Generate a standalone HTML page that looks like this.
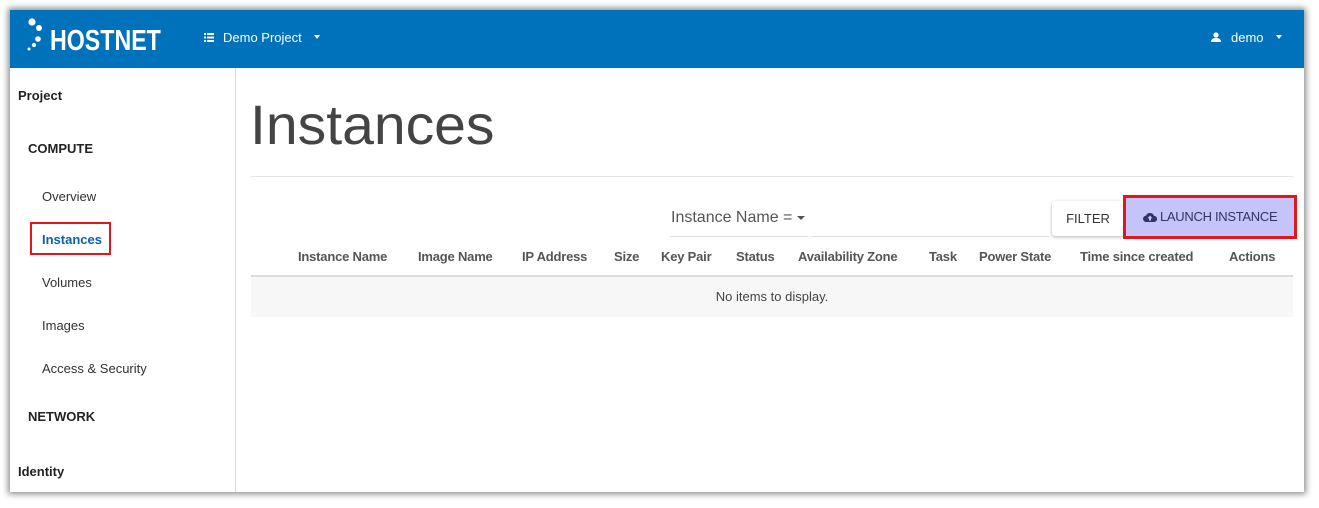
<!DOCTYPE html>
<html><head><meta charset="utf-8"><style>
*{margin:0;padding:0;box-sizing:border-box}
body{width:1319px;height:508px;background:#fff;font-family:"Liberation Sans",sans-serif;position:relative;overflow:hidden}
.frame{position:absolute;left:10px;top:10px;width:1294px;height:482px;background:#fff;box-shadow:0 0 6px 2px rgba(0,0,0,.45)}
.hdr{position:absolute;left:0;top:0;width:1294px;height:58px;background:#0072bc;color:#fff}
.side{position:absolute;left:0;top:58px;width:226px;height:424px;border-right:1px solid #ddd}
.t{position:absolute;white-space:nowrap}
.b{font-weight:bold}
.th{position:absolute;top:239px;font-size:13px;font-weight:bold;color:#555;letter-spacing:-0.2px}
</style></head><body>
<div class="frame">
<div class="hdr">
<svg class="t" style="left:16px;top:8px" width="22" height="36"><circle cx="6" cy="4" r="3.6" fill="#fff"/><circle cx="13" cy="10" r="3" fill="#fff"/><circle cx="12" cy="21" r="2.8" fill="#fff"/><circle cx="8" cy="27" r="2.1" fill="#fff"/><circle cx="3" cy="31" r="1.5" fill="#fff"/></svg>
<div class="t b" style="left:40px;top:15px;font-size:29px;line-height:32px;transform:scaleX(0.8);transform-origin:left">HOSTNET</div>
<svg class="t" style="left:194px;top:23px" width="10" height="9"><rect x="0" y="0" width="2" height="2" fill="#fff"/><rect x="3" y="0" width="7" height="2" fill="#fff"/><rect x="0" y="3.5" width="2" height="2" fill="#fff"/><rect x="3" y="3.5" width="7" height="2" fill="#fff"/><rect x="0" y="7" width="2" height="2" fill="#fff"/><rect x="3" y="7" width="7" height="2" fill="#fff"/></svg>
<div class="t" style="left:213px;top:20px;font-size:13px">Demo Project</div>
<div class="t" style="left:304px;top:25px;border-left:3.5px solid transparent;border-right:3.5px solid transparent;border-top:4px solid #fff"></div>
<svg class="t" style="left:1201px;top:22px" width="10" height="10"><circle cx="5" cy="3" r="2.6" fill="#fff"/><path d="M0 10 Q0 6 5 6 Q10 6 10 10Z" fill="#fff"/></svg>
<div class="t" style="left:1221px;top:20px;font-size:13px">demo</div>
<div class="t" style="left:1266px;top:25px;border-left:3.5px solid transparent;border-right:3.5px solid transparent;border-top:4px solid #fff"></div>
</div>
<div class="side">
<div class="t b" style="left:8px;top:20px;font-size:13px;color:#222">Project</div>
<div class="t b" style="left:18px;top:73px;font-size:13px;color:#222">COMPUTE</div>
<div class="t" style="left:32px;top:121px;font-size:13px;color:#333">Overview</div>
<div class="t" style="left:20px;top:154px;width:81px;height:33px;border:2px solid #e8141b"></div>
<div class="t b" style="left:32px;top:164px;font-size:13px;color:#0d5fb0">Instances</div>
<div class="t" style="left:32px;top:207px;font-size:13px;color:#333">Volumes</div>
<div class="t" style="left:32px;top:250px;font-size:13px;color:#333">Images</div>
<div class="t" style="left:32px;top:293px;font-size:13px;color:#333">Access &amp; Security</div>
<div class="t b" style="left:18px;top:341px;font-size:13px;color:#222">NETWORK</div>
<div class="t b" style="left:8px;top:396px;font-size:13px;color:#222">Identity</div>
</div>
<div class="t" style="left:240px;top:80px;font-size:56px;color:#444;line-height:70px;transform:scaleX(1.02);transform-origin:left">Instances</div>
<div class="t" style="left:241px;top:166px;width:1042px;height:1px;background:#e5e5e5"></div>
<div class="t" style="left:661px;top:199px;font-size:16px;color:#555">Instance Name =</div>
<div class="t" style="left:787px;top:206px;border-left:4px solid transparent;border-right:4px solid transparent;border-top:4px solid #555"></div>
<div class="t" style="left:660px;top:226px;width:138px;height:1px;background:#ddd"></div>
<div class="t" style="left:801px;top:226px;width:238px;height:1px;background:#ddd"></div>
<div class="t" style="left:1042px;top:191px;width:72px;height:35px;border-radius:3px;box-shadow:0 1px 3px rgba(0,0,0,.3);background:#fff;font-size:13px;color:#333;text-align:center;line-height:35px">FILTER</div>
<div class="t" style="left:1113px;top:185px;width:174px;height:44px;border:3px solid #e8141b"></div>
<div class="t" style="left:1116px;top:188px;width:168px;height:38px;background:#c4c4fa;border-radius:2px;font-size:13px;color:#333366;line-height:38px;padding-left:17px;letter-spacing:-0.3px">
<svg style="vertical-align:-1px;margin-right:3px" width="14" height="10" viewBox="0 0 14 10"><path d="M3.5 10 A3.2 3.2 0 0 1 3 3.6 A4.3 4.3 0 0 1 11 3.9 A3 3 0 0 1 11 10Z" fill="#333366"/><path d="M7 3.5 L9.5 6.3 H8 V8.5 H6 V6.3 H4.5Z" fill="#c4c4fa"/></svg>LAUNCH INSTANCE</div>
<div class="th" style="left:288px">Instance Name</div>
<div class="th" style="left:408px">Image Name</div>
<div class="th" style="left:512px">IP Address</div>
<div class="th" style="left:604px">Size</div>
<div class="th" style="left:651px">Key Pair</div>
<div class="th" style="left:726px">Status</div>
<div class="th" style="left:788px">Availability Zone</div>
<div class="th" style="left:919px">Task</div>
<div class="th" style="left:969px">Power State</div>
<div class="th" style="left:1070px">Time since created</div>
<div class="th" style="left:1219px">Actions</div>
<div class="t" style="left:241px;top:265px;width:1042px;height:2px;background:#ddd"></div>
<div class="t" style="left:241px;top:267px;width:1042px;height:40px;background:#f7f7f7;font-size:13px;color:#444;text-align:center;line-height:40px">No items to display.</div>
</div>
</body></html>
